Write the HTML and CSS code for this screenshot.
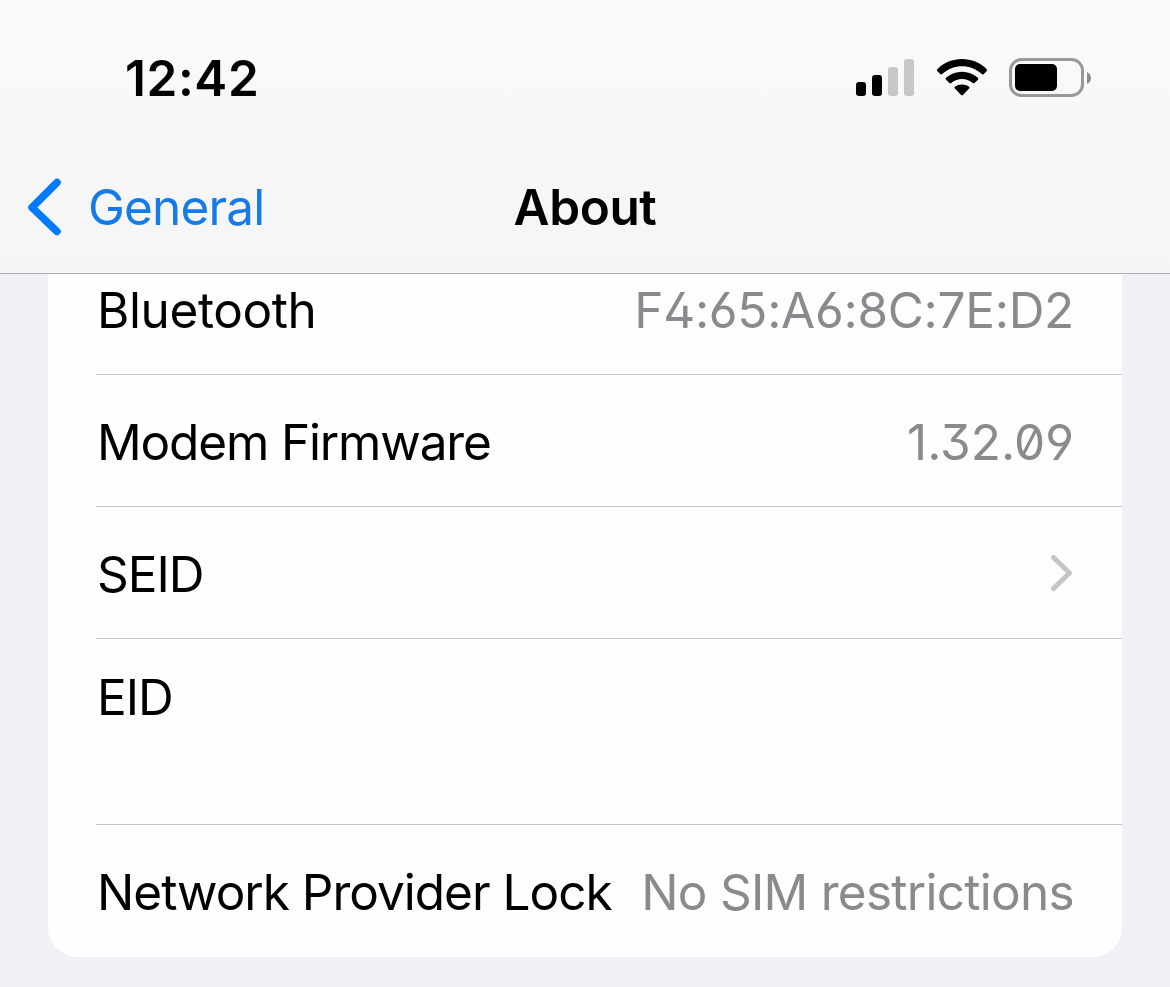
FILE: index.html
```
<!doctype html>
<html lang="en">

  <head>
    <meta charset="utf-8">
    <title>About</title>
    <link rel="stylesheet" href="styles.css">
  </head>

  <body>
    <header class="top">
      <div class="status-bar">
        <span class="time">12:42</span>
        <div class="status-icons">
          <svg class="signal" width="60" height="40" viewBox="0 0 60 40">
            <rect x="1" y="25" width="10" height="14" rx="3"/>
            <rect x="17" y="18" width="10" height="21" rx="3"/>
            <rect class="off" x="33" y="10" width="10" height="29" rx="3"/>
            <rect class="off" x="49" y="2" width="10" height="37" rx="3"/>
          </svg>
          <svg class="wifi" width="52" height="40" viewBox="0 0 52 40">
            <path d="M1.3 12.2C14-1.5 38-1.5 50.7 12.2Q51.6 13.2 50.7 14.1L47.6 17.2Q46.7 18 45.8 17.1C34.5 6.6 17.5 6.6 6.2 17.1Q5.3 18 4.4 17.2L1.3 14.1Q.4 13.2 1.3 12.2Z"/>
            <path d="M10.1 20.8C19 12.6 33 12.6 41.9 20.8Q42.9 21.8 42 22.7L38.5 26.1Q37.6 26.9 36.7 26.1C30.5 20.7 21.5 20.7 15.3 26.1Q14.4 26.9 13.5 26.1L10 22.7Q9.1 21.8 10.1 20.8Z"/>
            <path d="M18.9 29.8C23 26.8 29 26.8 33.1 29.8Q34 30.6 33.1 31.5L26.9 38.1Q26 39 25.1 38.1L18.9 31.5Q18 30.6 18.9 29.8Z"/>
          </svg>
          <svg class="battery" width="84" height="40" viewBox="0 0 84 40">
            <rect class="shell" x="1.5" y="2.5" width="72" height="36" rx="11"/>
            <rect x="6" y="7" width="42" height="27" rx="5"/>
            <path class="tip" d="M78 15Q82 17 82 21T78 27Z"/>
          </svg>
        </div>
      </div>
      <nav class="nav-bar">
        <a href="#" class="back">
          <svg width="36" height="60" viewBox="0 0 36 60">
            <path d="M31 5.5L6 30.5L31 54.5"/>
          </svg>
          <span>General</span>
        </a>
        <h1>About</h1>
      </nav>
    </header>

    <main>
      <ul class="list">
        <li class="row">
          <span class="label bluetooth">Bluetooth</span>
          <span class="value address">F4:65:A6:8C:7E:D2</span>
        </li>
        <li class="row">
          <span class="label modem">Modem Firmware</span>
          <span class="value">1.32.09</span>
        </li>
        <li class="row">
          <span class="label">SEID</span>
          <svg class="chevron" width="24" height="38" viewBox="0 0 24 38">
            <path d="M3.5 2.5L19.5 18L3.5 33.5"/>
          </svg>
        </li>
        <li class="row tall">
          <span class="label">EID</span>
        </li>
        <li class="row">
          <span class="label">Network Provider Lock</span>
          <span class="value restrictions">No SIM restrictions</span>
        </li>
      </ul>
    </main>
  </body>
</html>
```

FILE: styles.css
```
* {
    box-sizing: border-box;
}

body {
    margin: 0;
    height: 987px;
    overflow: hidden;
    background: #f1f0f6;
    color: #000;
    font-family: Inter, "Liberation Sans", sans-serif;
    font-size: 49.5px;
    line-height: 60px;
    white-space: nowrap;
}

svg {
    display: block;
    flex: none;
}

.top {
    height: 274px;
    background: linear-gradient(#fafafc, #f5f5f6);
    border-bottom: 1px solid #b0b0b3;
}

.status-bar {
    display: flex;
    justify-content: space-between;
    height: 142px;
    padding: 48px 77px 0 125px;
}

.time {
    font-weight: 600;
    letter-spacing: 0.6px;
}

.status-icons {
    display: flex;
    padding-top: 9px;
}

.signal .off {
    fill: #c7c7c9;
}

.wifi {
    margin-left: 21px;
}

.battery {
    margin-left: 21px;
}

.battery .shell {
    fill: none;
    stroke: #98989a;
    stroke-width: 3;
}

.battery .tip {
    fill: #8c8c8e;
}

.nav-bar {
    display: grid;
    grid-template-columns: 1fr auto 1fr;
    align-items: center;
    height: 129px;
}

.back {
    display: flex;
    align-items: center;
    gap: 26px;
    padding-left: 26px;
    color: #157be8;
    letter-spacing: -0.85px;
    text-decoration: none;
}

.back path {
    fill: none;
    stroke: #007aff;
    stroke-width: 7.5;
    stroke-linecap: round;
    stroke-linejoin: round;
}

h1 {
    margin: 0;
    font-size: inherit;
    font-weight: 600;
    letter-spacing: -0.4px;
}

main {
    height: 713px;
    overflow: hidden;
    padding: 0 48px;
}

.list {
    margin: -31px 0 0;
    padding: 0 0 0 48px;
    list-style: none;
    background: #fefefe;
    border-radius: 30px;
}

.row {
    display: flex;
    align-items: center;
    justify-content: space-between;
    height: 132px;
    padding: 3px 48px 0 1px;
    border-bottom: 1px solid #c5c5c7;
    background: #fefefe;
}

.row:last-child {
    padding-top: 1px;
    border-bottom: none;
    border-radius: 0 0 30px 0;
}

.tall {
    align-items: flex-start;
    height: 186px;
    padding-top: 28px;
}

.label {
    letter-spacing: -1px;
}

.bluetooth {
    letter-spacing: -0.4px;
}

.modem {
    letter-spacing: -1.15px;
}

.value {
    color: #8a8a8e;
    font-feature-settings: "ss01", "zero";
}

.address {
    letter-spacing: -0.3px;
}

.restrictions {
    letter-spacing: -0.72px;
}

.chevron path {
    fill: none;
    stroke: #c5c5c7;
    stroke-width: 5;
    stroke-linecap: round;
    stroke-linejoin: round;
}
```
